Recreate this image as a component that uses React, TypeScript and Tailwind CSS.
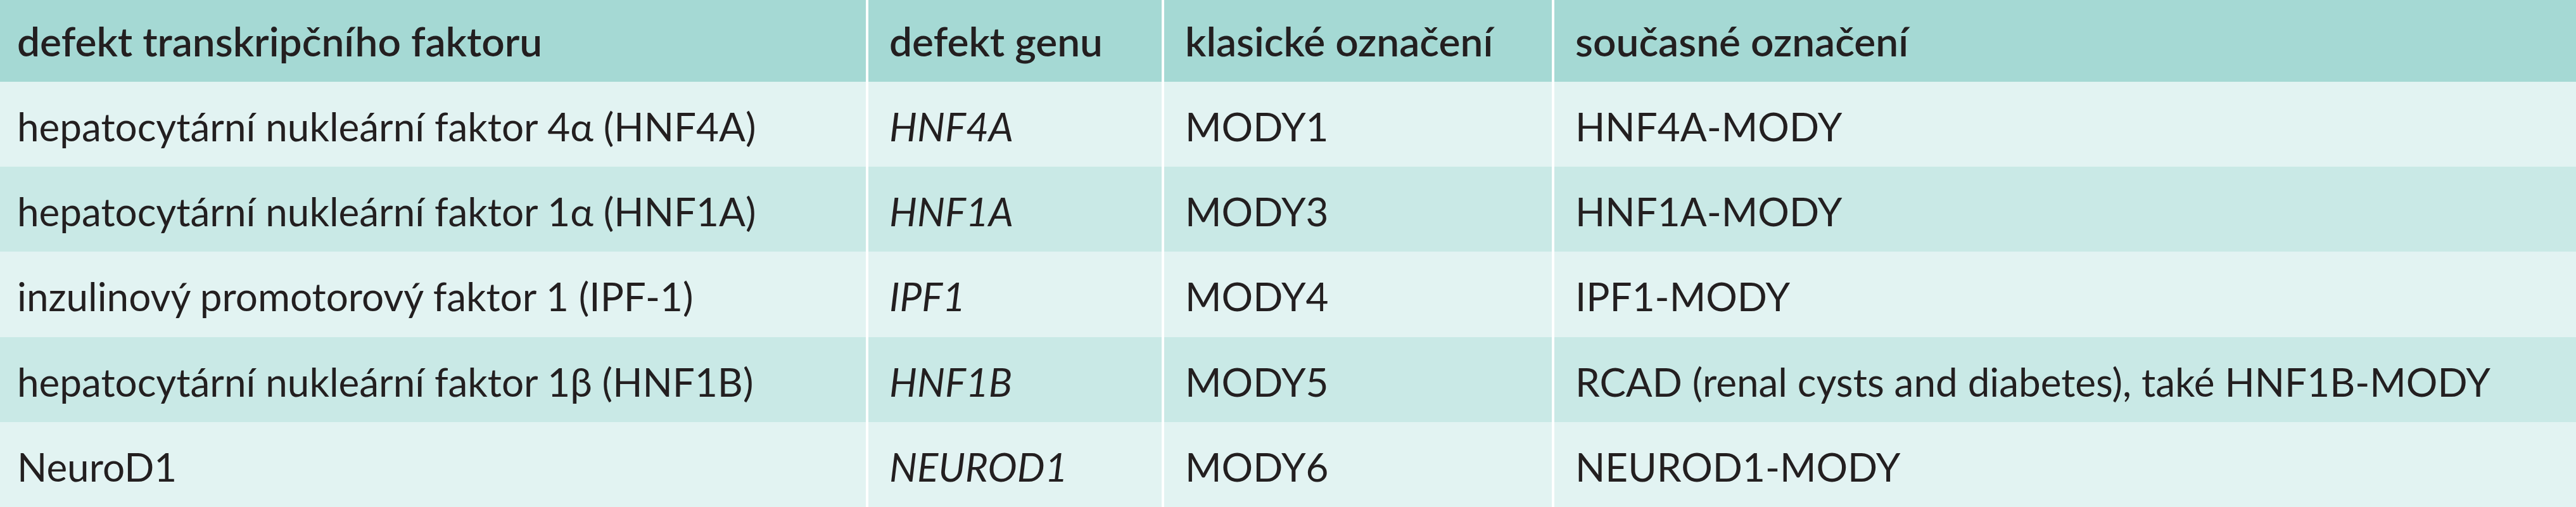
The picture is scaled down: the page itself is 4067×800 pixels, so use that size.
import React from 'react';

type Row = {
  factor: string;
  gene: string;
  classic: string;
  current: string;
};

const rows: Row[] = [
  { factor: 'hepatocytární nukleární faktor 4α (HNF4A)', gene: 'HNF4A', classic: 'MODY1', current: 'HNF4A-MODY' },
  { factor: 'hepatocytární nukleární faktor 1α (HNF1A)', gene: 'HNF1A', classic: 'MODY3', current: 'HNF1A-MODY' },
  { factor: 'inzulinový promotorový faktor 1 (IPF-1)', gene: 'IPF1', classic: 'MODY4', current: 'IPF1-MODY' },
  {
    factor: 'hepatocytární nukleární faktor 1β (HNF1B)',
    gene: 'HNF1B',
    classic: 'MODY5',
    current: 'RCAD (renal cysts and diabetes), také HNF1B-MODY',
  },
  { factor: 'NeuroD1', gene: 'NEUROD1', classic: 'MODY6', current: 'NEUROD1-MODY' },
];

const headers = ['defekt transkripčního faktoru', 'defekt genu', 'klasické označení', 'současné označení'];

const App = () => {
  return (
    <div className="w-[4067px] h-[800px] bg-white font-['Lato','Liberation_Sans',sans-serif] text-[62px] leading-none text-[#231f20]">
      <div className="grid h-full grid-cols-[1367px_463px_612px_1fr] grid-rows-[129px_repeat(5,1fr)] gap-x-[4px] bg-white">
        {/* Header */}
        {headers.map((h, i) => (
          <div
            key={h}
            className={`flex items-center bg-[#a5d9d4] text-[64px] font-semibold ${i === 0 ? 'pl-[27px]' : 'pl-[33px]'}`}
          >
            {h}
          </div>
        ))}

        {rows.map((row, i) => {
          const bg = i % 2 === 0 ? 'bg-[#e2f3f2]' : 'bg-[#c9e9e6]';
          return (
            <React.Fragment key={row.gene}>
              <div className={`flex items-center pl-[27px] pt-[6px] ${bg}`}>{row.factor}</div>
              <div className={`flex items-center pl-[33px] pt-[6px] italic ${bg}`}>{row.gene}</div>
              <div className={`flex items-center pl-[33px] pt-[6px] ${bg}`}>{row.classic}</div>
              <div className={`flex items-center pl-[33px] pt-[6px] ${bg}`}>{row.current}</div>
            </React.Fragment>
          );
        })}
      </div>
    </div>
  );
};

export default App;
